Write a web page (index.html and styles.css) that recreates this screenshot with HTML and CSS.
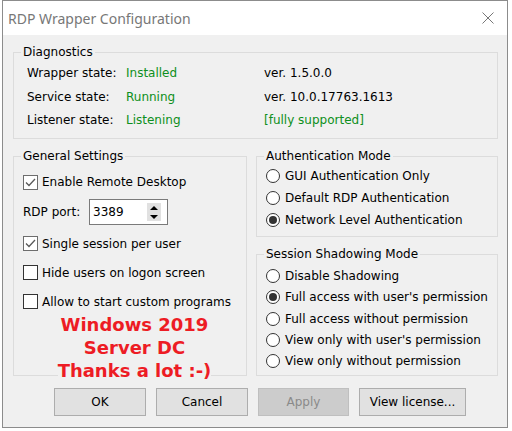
FILE: index.html
```html
<!DOCTYPE html>
<html lang="en">
<head>
  <meta charset="UTF-8">
  <title>RDP Wrapper Configuration</title>
  <link rel="stylesheet" href="styles.css">
</head>
<body>
  <div class="window">
    <div class="titlebar">
      <span class="title">RDP Wrapper Configuration</span>
      <svg class="close" width="12" height="12" viewBox="0 0 12 12">
        <path d="M0.5 0.5 L11.5 11.5 M11.5 0.5 L0.5 11.5" stroke="#777" stroke-width="1" fill="none"/>
      </svg>
    </div>

    <div class="client">
      <!-- Diagnostics -->
      <fieldset class="group">
        <legend>Diagnostics</legend>
        <div class="diag-grid">
          <span>Wrapper state:</span><span class="ok">Installed</span><span>ver. 1.5.0.0</span>
          <span>Service state:</span><span class="ok">Running</span><span>ver. 10.0.17763.1613</span>
          <span>Listener state:</span><span class="ok">Listening</span><span class="ok">[fully supported]</span>
        </div>
      </fieldset>

      <div class="columns">
        <fieldset class="group">
          <legend>General Settings</legend>
          <div class="general-body">
            <div class="check first"><span class="box on"><svg width="13" height="13" viewBox="0 0 13 13"><path d="M2 6.5 L5 9.5 L11 3" stroke="#5a5a5a" stroke-width="1.3" fill="none"/></svg></span>Enable Remote Desktop</div>
            <div class="port-row">
              <span class="port-label">RDP port:</span>
              <div class="spin">
                <span>3389</span>
                <span class="spin-buttons"><span class="spin-btn up"></span><span class="spin-btn down"></span></span>
              </div>
            </div>
            <div class="check"><span class="box on"><svg width="13" height="13" viewBox="0 0 13 13"><path d="M2 6.5 L5 9.5 L11 3" stroke="#5a5a5a" stroke-width="1.3" fill="none"/></svg></span>Single session per user</div>
            <div class="check"><span class="box"></span>Hide users on logon screen</div>
            <div class="check"><span class="box"></span>Allow to start custom programs</div>
            <div class="thanks">Windows 2019<br>Server DC<br>Thanks a lot :-)</div>
          </div>
        </fieldset>

        <div class="right-col">
          <fieldset class="group">
            <legend>Authentication Mode</legend>
            <div class="auth-body">
              <div class="radio"><span class="dot"></span>GUI Authentication Only</div>
              <div class="radio"><span class="dot"></span>Default RDP Authentication</div>
              <div class="radio"><span class="dot on"></span>Network Level Authentication</div>
            </div>
          </fieldset>
          <fieldset class="group">
            <legend>Session Shadowing Mode</legend>
            <div class="shadow-body">
              <div class="radio"><span class="dot"></span>Disable Shadowing</div>
              <div class="radio"><span class="dot on"></span>Full access with user's permission</div>
              <div class="radio"><span class="dot"></span>Full access without permission</div>
              <div class="radio"><span class="dot"></span>View only with user's permission</div>
              <div class="radio"><span class="dot"></span>View only without permission</div>
            </div>
          </fieldset>
        </div>
      </div>

      <div class="buttons">
        <button class="btn">OK</button>
        <button class="btn">Cancel</button>
        <button class="btn apply" disabled>Apply</button>
        <button class="btn wide">View license...</button>
      </div>
    </div>
  </div>
</body>
</html>
```

FILE: styles.css
```css
html, body {
  margin: 0; padding: 0;
  background: #fff;
}
body {
  font-family: "DejaVu Sans", Tahoma, sans-serif;
  font-size: 12px;
  color: #000;
}

/* window frame */
.window {
  margin-left: 2px;
  width: 506px; height: 428px;
  box-sizing: border-box;
  border: 1px solid #8c8c8c;
  background: #f0f0f0;
  display: flex; flex-direction: column;
}
.titlebar {
  flex: none;
  height: 34px;
  background: #fff;
  display: flex; align-items: center; justify-content: space-between;
  padding: 0 13px 0 5px;
}
.title {
  font-family: "Noto Sans", "Open Sans", sans-serif;
  font-size: 14px;
  color: #777;
}
.client {
  flex: 1;
  padding: 0 9px 0 10px;
}

/* group boxes */
.group {
  margin: 0; padding: 0;
  min-width: 0;
  border: 1px solid #dcdcdc;
}
.group legend {
  margin-left: 7px;
  padding: 0 2px;
  line-height: 16px;
}
.client > .group { margin-top: 9px; }

.diag-grid {
  display: grid;
  grid-template-columns: 99px 138px auto;
  grid-auto-rows: 23.5px;
  align-items: center;
  padding: 1.5px 0 6px 13px;
}
.ok { color: #0d8f20; }

.columns {
  display: grid;
  grid-template-columns: 234px 1fr;
  column-gap: 9px;
  margin-top: 9px;
}
.right-col {
  display: flex; flex-direction: column;
  gap: 9px;
}

/* general settings */
.general-body { padding: 5px 0 0 9px; }
.check {
  display: flex; align-items: center;
  height: 29px;
}
.check.first { height: 26px; }
.box {
  width: 15px; height: 15px;
  box-sizing: border-box;
  border: 1px solid #333;
  background: #fff;
  margin-right: 4px;
  display: flex;
}
.box.on { border-color: #6d6d6d; }

.port-row {
  display: flex; align-items: center;
  height: 34px;
}
.port-label { width: 66px; }
.spin {
  width: 79px; height: 26px;
  box-sizing: border-box;
  border: 1px solid #7a7a7a;
  background: #fff;
  display: flex; align-items: center; justify-content: space-between;
  padding: 0 6px 0 3px;
}
.spin-buttons { display: flex; flex-direction: column; }
.spin-btn {
  width: 14px; height: 9px;
  background: #e1e1e1;
  display: flex; align-items: center; justify-content: center;
}
.spin-btn::before {
  content: "";
  border-left: 4px solid transparent;
  border-right: 4px solid transparent;
}
.spin-btn.up::before { border-bottom: 4px solid #000; }
.spin-btn.down::before { border-top: 4px solid #000; }

.thanks {
  position: relative;
  width: fit-content;
  margin: -3px auto -10px;
  background: #f0f0f0;
  color: #ed1c24;
  font-weight: bold;
  font-size: 18px;
  line-height: 23px;
  text-align: center;
}

/* radio groups */
.auth-body { padding: 1px 0 5px 9px; }
.shadow-body { padding: 3.5px 0 3px 9px; }
.radio {
  display: flex; align-items: center;
  height: 22px;
}
.shadow-body .radio { height: 21.25px; }
.dot {
  width: 14px; height: 14px;
  box-sizing: border-box;
  border: 1px solid #333;
  border-radius: 50%;
  background: #fff;
  margin-right: 5px;
  display: flex; align-items: center; justify-content: center;
}
.dot.on::after {
  content: "";
  width: 8px; height: 8px;
  border-radius: 50%;
  background: #333;
}

/* bottom buttons */
.buttons {
  display: flex; gap: 10px;
  margin-top: 12px;
  padding-left: 41px;
}
.btn {
  width: 92px; height: 28px;
  box-sizing: border-box;
  border: 1px solid #adadad;
  background: #e1e1e1;
  font: inherit; color: #000;
  padding: 0;
}
.btn.apply {
  width: 91px;
  background: #cccccc; border-color: #bfbfbf;
  color: #8a8a8a;
}
.btn.wide { width: 107px; }
```
